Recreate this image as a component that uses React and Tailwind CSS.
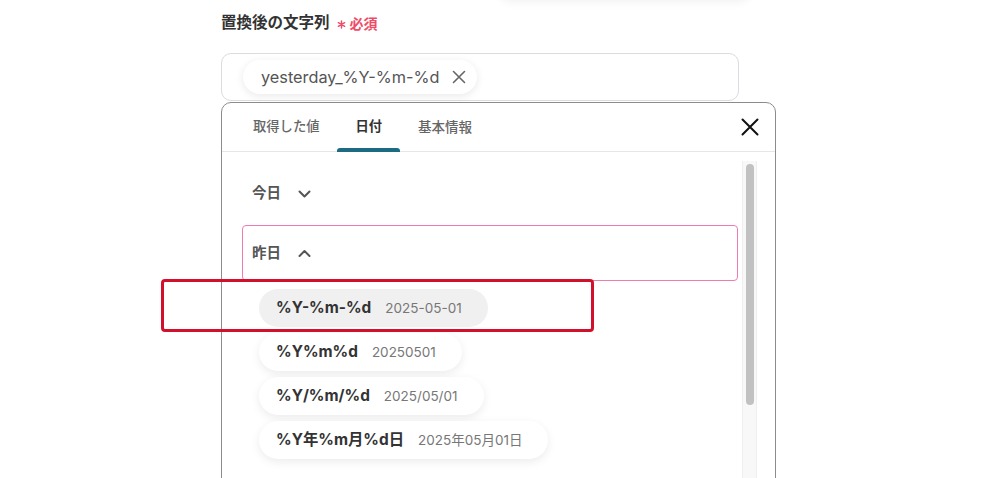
import React from 'react';

const FONT = { fontFamily: '"Inter", "Noto Sans CJK JP", sans-serif' };

const formats = [
    { fmt: '%Y-%m-%d', value: '2025-05-01', active: true },
    { fmt: '%Y%m%d', value: '20250501' },
    { fmt: '%Y/%m/%d', value: '2025/05/01' },
    { fmt: '%Y年%m月%d日', value: '2025年05月01日' },
];

const Chevron = ({ up }) => (
    <svg width="15" height="15" viewBox="0 0 15 15" fill="none" stroke="#555" strokeWidth="2" strokeLinecap="round" strokeLinejoin="round">
        {up ? <path d="M2.5 10l5-5 5 5" /> : <path d="M2.5 5.5l5 5 5-5" />}
    </svg>
);

const App = () => {
    return (
        <div className="relative w-[1000px] h-[478px] overflow-hidden bg-white" style={FONT}>
            {/* faint shadow of a card above the viewport */}
            <div className="absolute left-[500px] top-[-40px] w-[250px] h-[40px] rounded-b-[10px] bg-white shadow-[0_2px_10px_rgba(0,0,0,0.06)]"></div>

            <div className="pl-[221px] pt-[13px] w-[776px]">
                {/* label */}
                <div className="flex items-center h-[20px]">
                    <span className="text-[15.5px] font-bold text-[#333]">置換後の文字列</span>
                    <svg className="ml-[7px] mt-[3px]" width="9" height="9" viewBox="0 0 10 10" stroke="#ef4b68" strokeWidth="1.6" strokeLinecap="round">
                        <path d="M5 1v8M1.5 3l7 4M8.5 3l-7 4" />
                    </svg>
                    <span className="ml-[4px] text-[14px] font-semibold text-[#ef4b68]">必須</span>
                </div>

                {/* input */}
                <div className="mt-[20px] w-[518px] h-[48px] rounded-[10px] border border-[#d9dce1] flex items-center pl-[21px]">
                    <div className="flex items-center h-[34px] rounded-full bg-white shadow-[0_2px_8px_rgba(0,0,0,0.09)] pl-[18px] pr-[11px] gap-[12px]">
                        <span className="text-[16.3px] text-[#555]">yesterday_%Y-%m-%d</span>
                        <svg width="14" height="14" viewBox="0 0 14 14" stroke="#666" strokeWidth="1.6" strokeLinecap="round">
                            <path d="M1.5 1.5l11 11M12.5 1.5l-11 11" />
                        </svg>
                    </div>
                </div>

                {/* dropdown panel */}
                <div className="mt-px w-[555px] h-[400px] rounded-t-[10px] border border-[#8c8c8c] bg-white">
                    <div className="flex items-end h-[49px] border-b border-[#e6e6e6] pl-[13px] pr-[16px]">
                        <div className="px-[18px] h-full flex items-center text-[13.3px] font-medium text-[#666]">取得した値</div>
                        <div className="relative px-[18px] h-full flex items-center text-[13.3px] font-bold text-[#333]">
                            日付
                            <div className="absolute left-0 right-0 bottom-[-1px] h-[4px] rounded-t-[3px] bg-[#1d6b83]"></div>
                        </div>
                        <div className="px-[18px] h-full flex items-center text-[13.5px] font-medium text-[#666]">基本情報</div>
                        <div className="ml-auto h-full flex items-center">
                            <svg width="18" height="18" viewBox="0 0 18 18" stroke="#111" strokeWidth="2" strokeLinecap="round">
                                <path d="M1.5 1.5l15 15M16.5 1.5l-15 15" />
                            </svg>
                        </div>
                    </div>

                    <div className="flex">
                        <div className="flex-1 pl-[20px] pr-[4px] pt-[13px]">
                            <div className="flex items-center gap-[16px] h-[56px] pl-[10px]">
                                <span className="text-[14.5px] font-semibold text-[#555]">今日</span>
                                <Chevron />
                            </div>
                            <div className="mt-[4px] flex items-center gap-[16px] h-[56px] pl-[9px] rounded-[4px] border border-[#f07bb0]">
                                <span className="text-[14.5px] font-semibold text-[#555]">昨日</span>
                                <Chevron up />
                            </div>
                            <div className="mt-[8px] pl-[17px] flex flex-col items-start gap-[6px]">
                                {formats.map((f) => (
                                    <div
                                        key={f.fmt}
                                        className={`flex items-center h-[38px] rounded-full pl-[17px] pr-[26px] gap-[14px] ${
                                            f.active ? 'bg-[#f0f0f0]' : 'bg-white shadow-[0_3px_10px_rgba(0,0,0,0.08)]'
                                        }`}
                                    >
                                        <span className="text-[15.4px] font-bold text-[#333]">{f.fmt}</span>
                                        <span className="text-[13.5px] text-[#777]">{f.value}</span>
                                    </div>
                                ))}
                            </div>
                        </div>
                        {/* scrollbar */}
                        <div className="w-[15px] mr-[18px] mt-[9px] h-[340px] bg-[#f8f8f8] border-x border-[#efefef] flex justify-center pt-[3px]">
                            <div className="w-[8px] h-[241px] rounded-full bg-[#c1c1c1]"></div>
                        </div>
                    </div>
                </div>
            </div>

            {/* annotation highlight */}
            <div className="absolute left-[161px] top-[279px] w-[433px] h-[53px] rounded-[4px] border-[3px] border-[#d3102c]"></div>
        </div>
    );
};

export default App;
